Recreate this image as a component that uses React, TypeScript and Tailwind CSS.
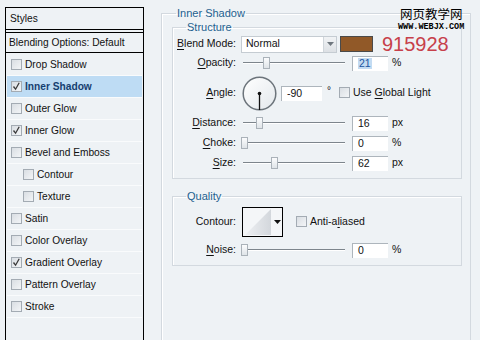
import React from "react";

const sans = "font-['Liberation_Sans',Arial,sans-serif]";

function Check({ on }: { on?: boolean }) {
  return (
    <span className="relative inline-block w-[11px] h-[11px] shrink-0 border border-[#a3abb3] bg-gradient-to-br from-[#d9dee3] to-[#f3f5f7]">
      {on && (
        <svg viewBox="0 0 11 11" className="absolute left-[-1px] top-[-1px] w-[11px] h-[11px]">
          <path d="M2.5 5.5 L4.6 8.2 L8.2 1.8" stroke="#3a3a3a" strokeWidth="1.3" fill="none" />
        </svg>
      )}
    </span>
  );
}

function Key({ k, rest, pre = "" }: { k: string; rest: string; pre?: string }) {
  return (
    <span>
      {pre}
      <span className="underline underline-offset-[1.5px]">{k}</span>
      {rest}
    </span>
  );
}

// slider track with thumb; thumb position is the value
function Slider({ at }: { at: string }) {
  return (
    <div className="relative w-[102px] h-[14px] ml-[7px] shrink-0">
      <div className="absolute left-0 right-0 top-[6px] h-[1px] bg-[#7d858c]" />
      <div className="absolute left-0 right-0 top-[7px] h-[1px] bg-white" />
      <div className={`absolute top-[1px] w-[7px] h-[12px] border border-[#aab2b9] bg-gradient-to-b from-[#fbfcfd] to-[#dfe4e8] ${at}`} />
    </div>
  );
}

function Field({ v, w = "w-[36px]", sel }: { v: string; w?: string; sel?: boolean }) {
  return (
    <div className={`${w} h-[15px] bg-white border-t border-l border-[#adb5bc] flex items-center pl-[5px] text-[10.5px] leading-none shrink-0`}>
      {sel ? <span className="bg-[#c3dbf2] text-[#1b55a0] px-[1px]">{v}</span> : v}
    </div>
  );
}

function Label({ children }: { children: React.ReactNode }) {
  return <div className="w-[63px] text-right shrink-0 text-[10.5px]">{children}</div>;
}

function SliderRow({ label, at, v, unit, cls, sel }: { label: React.ReactNode; at: string; v: string; unit: string; cls: string; sel?: boolean }) {
  return (
    <div className={`flex items-center ${cls}`}>
      <Label>{label}</Label>
      <Slider at={at} />
      <div className="ml-[7px]">
        <Field v={v} sel={sel} />
      </div>
      <span className="ml-[4px] text-[10.5px]">{unit}</span>
    </div>
  );
}

const styles: { name: string; on?: boolean; sub?: boolean; active?: boolean }[] = [
  { name: "Drop Shadow" },
  { name: "Inner Shadow", on: true, active: true },
  { name: "Outer Glow" },
  { name: "Inner Glow", on: true },
  { name: "Bevel and Emboss" },
  { name: "Contour", sub: true },
  { name: "Texture", sub: true },
  { name: "Satin" },
  { name: "Color Overlay" },
  { name: "Gradient Overlay", on: true },
  { name: "Pattern Overlay" },
  { name: "Stroke" },
];

export default function App() {
  return (
    <div className={`relative w-[480px] h-[340px] overflow-hidden bg-[#eef2f5] text-[#111] ${sans} flex`}>
      {/* styles list */}
      <div className="mt-[7px] ml-[5px] w-[139px] h-[340px] border-x border-t border-black flex flex-col shrink-0 text-[10.2px]">
        <div className="h-[22px] flex items-center pl-[4px] pt-[1px] border-b border-black">Styles</div>
        <div className="h-[2px]" />
        <div className="h-[21px] flex items-center pl-[3px] border-y border-black">Blending Options: Default</div>
        <div className="h-[1px]" />
        {styles.map((s) => (
          <div
            key={s.name}
            className={`mx-[1px] h-[22px] flex items-center gap-[3px] border-b border-[#f9fbfc] ${s.sub ? "pl-[16px]" : "pl-[4px]"} ${
              s.active ? "bg-[#bedcf4] font-bold text-[#163f70]" : ""
            }`}
          >
            <Check on={s.on} />
            <span>{s.name}</span>
          </div>
        ))}
      </div>

      {/* settings */}
      <fieldset className="ml-[17px] mt-[7px] w-[310px] h-[360px] border border-[#d3d9df] shadow-[inset_1px_1px_0_#fff] pl-[10px] pr-[8px] shrink-0">
        <legend className="ml-[4px] px-[1px] text-[11px] leading-[13px] text-[#23618f]">Inner Shadow</legend>

        <fieldset className="mt-[1px] w-[290px] border border-[#d3d9df] shadow-[inset_1px_1px_0_#fff] pb-[7px]">
          <legend className="ml-[13px] px-[1px] text-[11px] leading-[13px] text-[#23618f]">Structure</legend>

          <div className="flex items-center h-[18px] mt-[1px]">
            <Label>
              <Key k="B" rest="lend Mode:" />
            </Label>
            <div className="ml-[5px] w-[96px] h-[17px] bg-white border border-[#c5ccd2] flex items-center justify-between pl-[4px] text-[10.5px]">
              <span>Normal</span>
              <div className="w-[13px] h-[15px] bg-gradient-to-b from-[#f1f3f5] to-[#dde1e5] border-l border-[#d0d6db] flex items-center justify-center">
                <svg width="7" height="4" viewBox="0 0 7 4">
                  <path d="M0 0 H7 L3.5 4 Z" fill="#6f777e" />
                </svg>
              </div>
            </div>
            <div className="ml-[3px] w-[33px] h-[16px] border border-[#4a4a4a] bg-[#915928]" />
            <span className="ml-[9px] text-[20px] leading-none text-[#c7404a]">915928</span>
          </div>

          <SliderRow label={<Key k="O" rest="pacity:" />} at="left-[20px]" v="21" unit="%" cls="h-[18px] mt-[1px]" sel />

          <div className="flex items-center h-[34px] mt-[4px]">
            <Label>
              <Key k="A" rest="ngle:" />
            </Label>
            <svg width="35" height="35" viewBox="0 0 35 35" className="ml-[6px] shrink-0">
              <defs>
                <linearGradient id="dial" x1="0" y1="0" x2="1" y2="1">
                  <stop offset="0" stopColor="#ffffff" />
                  <stop offset="1" stopColor="#e3e8ec" />
                </linearGradient>
              </defs>
              <circle cx="17.5" cy="17.5" r="16.3" fill="url(#dial)" stroke="#6c747b" strokeWidth="1.5" />
              <line x1="17.5" y1="17.5" x2="17.5" y2="34" stroke="#111" strokeWidth="1.3" />
              <circle cx="17.5" cy="17.5" r="1.8" fill="#111" />
            </svg>
            <div className="ml-[4px]">
              <Field v="-90" w="w-[41px]" />
            </div>
            <span className="ml-[5px] mb-[6px] text-[10px]">°</span>
            <span className="ml-[8px]">
              <Check />
            </span>
            <span className="ml-[3px] text-[10.5px]">
              <Key pre="Use " k="G" rest="lobal Light" />
            </span>
          </div>

          <SliderRow label={<Key k="D" rest="istance:" />} at="left-[13px]" v="16" unit="px" cls="h-[16px] mt-[5px]" />
          <SliderRow label={<Key k="C" rest="hoke:" />} at="left-[-2px]" v="0" unit="%" cls="h-[16px] mt-[4px]" />
          <SliderRow label={<Key k="S" rest="ize:" />} at="left-[28px]" v="62" unit="px" cls="h-[16px] mt-[4px]" />
        </fieldset>

        <fieldset className="mt-[11px] w-[290px] border border-[#d3d9df] shadow-[inset_1px_1px_0_#fff] pb-[7px]">
          <legend className="ml-[13px] px-[1px] text-[11px] leading-[13px] text-[#23618f]">Quality</legend>
          <div className="flex items-center h-[30px] mt-[4px]">
            <Label>Contour:</Label>
            <div className="ml-[6px] w-[41px] h-[30px] border border-black bg-[#f4f6f8] flex items-center shrink-0">
              <svg width="30" height="28" viewBox="0 0 30 28">
                <defs>
                  <linearGradient id="ct" x1="0" y1="0" x2="1" y2="0">
                    <stop offset="0" stopColor="#eef0f3" />
                    <stop offset="1" stopColor="#d3d7dc" />
                  </linearGradient>
                </defs>
                <path d="M2 27 L28 1 L28 27 Z" fill="url(#ct)" />
              </svg>
              <svg width="7" height="4" viewBox="0 0 7 4" className="ml-[1px]">
                <path d="M0 0 H7 L3.5 4 Z" fill="#111" />
              </svg>
            </div>
            <span className="ml-[13px]">
              <Check />
            </span>
            <span className="ml-[3px] text-[10.5px]">
              <Key pre="Anti-a" k="l" rest="iased" />
            </span>
          </div>
          <SliderRow label={<Key k="N" rest="oise:" />} at="left-[-2px]" v="0" unit="%" cls="h-[16px] mt-[5px]" />
        </fieldset>
      </fieldset>

      {/* watermark */}
      <div className="absolute left-[398px] top-[6px] flex flex-col items-center gap-[2px]">
        <span className="text-[12.5px] leading-[15px] font-['Noto_Sans_CJK_SC',sans-serif] text-black">网页教学网</span>
        <span className="text-[8.5px] leading-[8px] font-bold font-['Liberation_Mono',monospace] text-black">WWW.WEBJX.COM</span>
      </div>
    </div>
  );
}
